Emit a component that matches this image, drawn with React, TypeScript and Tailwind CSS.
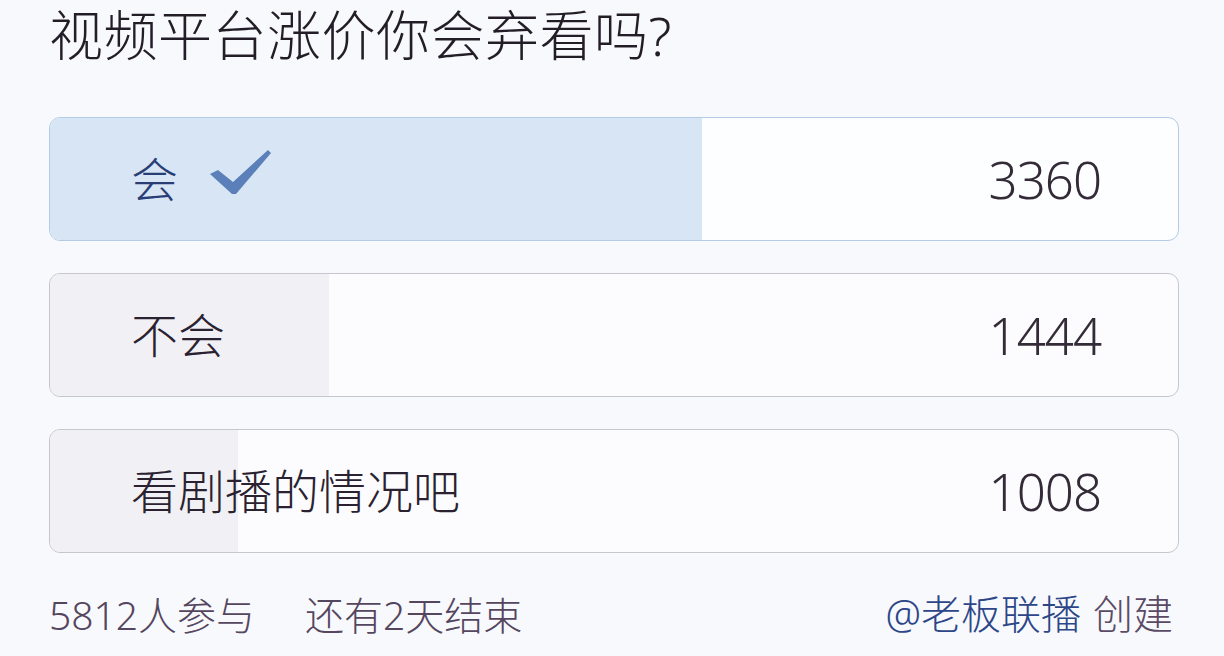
import React from "react";

const options = [
  { label: "会", count: 3360, fill: 652, selected: true },
  { label: "不会", count: 1444, fill: 279, selected: false },
  { label: "看剧播的情况吧", count: 1008, fill: 188, selected: false },
];

function Check() {
  return (
    <svg width="64" height="48" viewBox="0 0 64 48" className="ml-[31px] -mt-[12px]">
      <path d="M1 25 L9 21 L24 33 L59 1 L62 4 L27 45 L23 45 Z" fill="#5b7fb8" />
    </svg>
  );
}

export default function App() {
  return (
    <div
      className="w-[1224px] h-[656px] bg-[#f8f9fc] pl-[49px] pr-[45px] overflow-hidden font-light"
      style={{ fontFamily: '"Noto Sans", "Noto Sans CJK SC", sans-serif' }}
    >
      <div className="h-[117px] pt-[1px] text-[54px] leading-[68px] tracking-[0.5px] text-[#231d27]">
        视频平台涨价你会弃看吗?
      </div>
      <div className="flex flex-col gap-[32px]">
        {options.map((o) => (
          <div
            key={o.label}
            className={
              "relative h-[124px] rounded-[11px] border overflow-hidden " +
              (o.selected ? "border-[#b3cbe6] bg-[#fdfeff]" : "border-[#c6c6ce] bg-[#fcfcfe]")
            }
          >
            <div
              className={"absolute inset-y-0 left-0 " + (o.selected ? "bg-[#d7e5f5]" : "bg-[#f1f1f5]")}
              style={{ width: o.fill }}
            />
            <div className="relative flex h-full items-center pl-[81px] pr-[77px]">
              <span
                className={
                  "text-[47px] leading-none " + (o.selected ? "text-[#2a3e76]" : "text-[#2a2230]")
                }
              >
                {o.label}
              </span>
              {o.selected && <Check />}
              <span className="ml-auto text-[51px] leading-none tracking-[-1px] text-[#342b38]">
                {o.count}
              </span>
            </div>
          </div>
        ))}
      </div>
      <div className="flex items-center h-[122px] text-[39px] leading-none pr-[6px]">
        <span className="text-[#554660]">5812人参与</span>
        <span className="ml-[50px] text-[#554660]">还有2天结束</span>
        <span className="ml-auto text-[40px] text-[#2c4688]">@老板联播</span>
        <span className="ml-[12px] text-[40px] text-[#5a4a66]">创建</span>
      </div>
    </div>
  );
}
